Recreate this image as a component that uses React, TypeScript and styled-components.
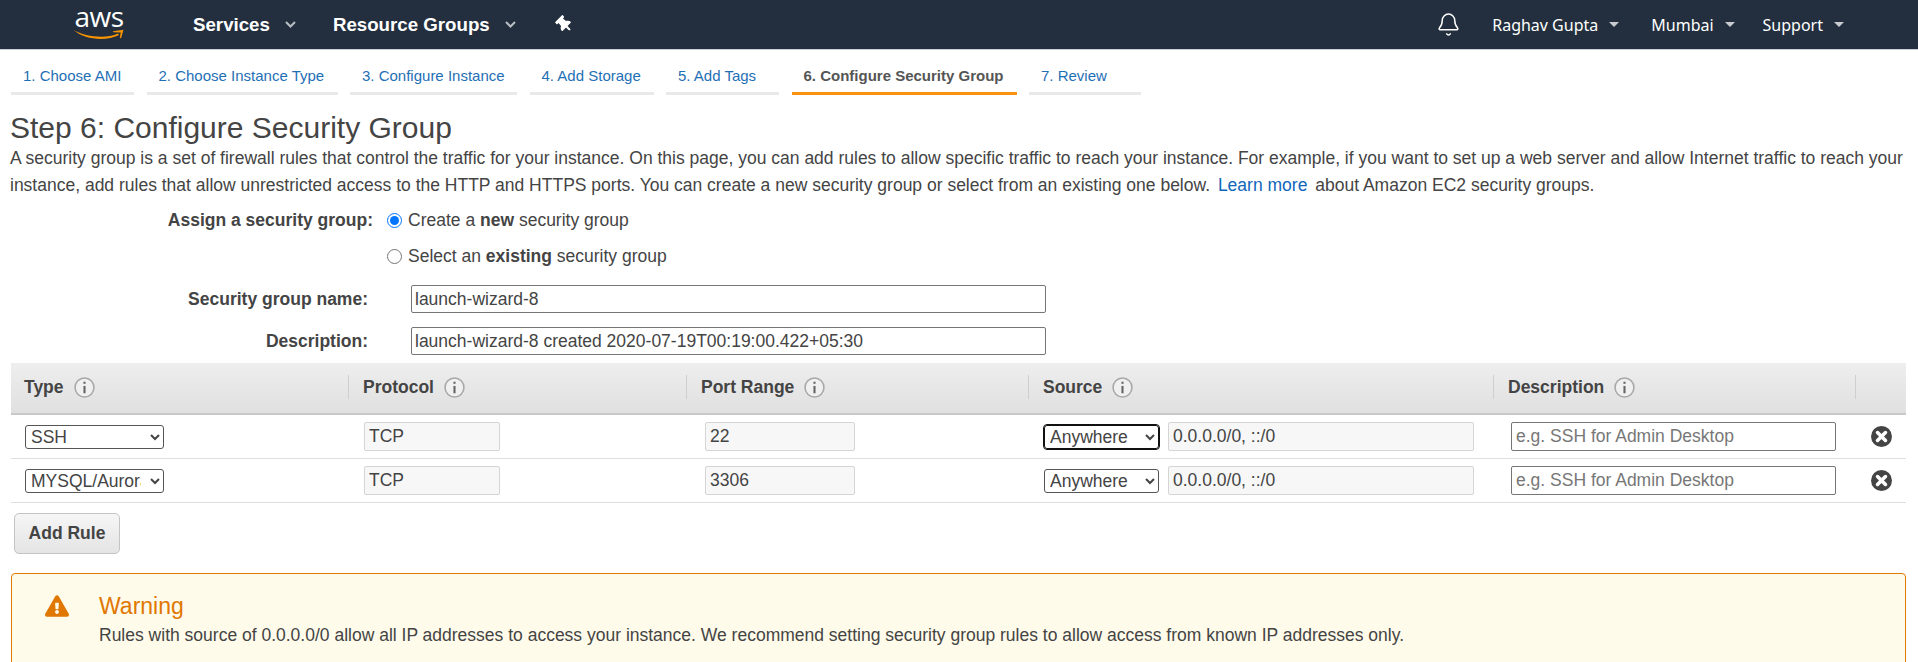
import React from "react";
import styled, { createGlobalStyle } from "styled-components";
import { Bell } from "lucide-react";
import { FaThumbtack, FaExclamationTriangle } from "react-icons/fa";

const GlobalStyle = createGlobalStyle`
  html, body { margin: 0; padding: 0; background: #fff; overflow: hidden; }
  body { font-family: "Liberation Sans", Arial, sans-serif; font-size: 17.5px; color: #444; }
  * { box-sizing: border-box; }
`;

const TopBar = styled.header`
  height: 50px;
  background: #232f3e;
  border-bottom: 1px solid #ccd0d4;
  display: flex;
  align-items: center;
  color: #fff;
`;

const Logo = styled.div`
  width: 52px;
  margin-left: 73px;
  display: flex;
  flex-direction: column;
  align-items: center;
  color: #fff;
  span {
    font-family: "Open Sans", sans-serif;
    font-size: 28px;
    line-height: 28px;
    letter-spacing: -0.6px;
    margin-top: -7px;
  }
  svg { margin-top: -1px; }
`;

const NavMain = styled.span<{ $left: number }>`
  margin-left: ${(p) => p.$left}px;
  font-size: 18.7px;
  font-weight: 700;
  display: flex;
  align-items: center;
  gap: 15px;
`;

const PinWrap = styled.span`
  margin-left: 40px;
  display: flex;
  transform: rotate(-45deg);
  font-size: 17px;
`;

const NavRight = styled.div`
  margin-left: auto;
  margin-right: 74px;
  display: flex;
  align-items: center;
`;

const NavItem = styled.span<{ $left: number }>`
  margin-left: ${(p) => p.$left}px;
  font-family: "Noto Sans", sans-serif;
  font-size: 16px;
  display: flex;
  align-items: center;
  gap: 11px;
`;

const Caret = styled.i`
  width: 0;
  height: 0;
  border-left: 5px solid transparent;
  border-right: 5px solid transparent;
  border-top: 5px solid #c8ccd0;
`;

const Steps = styled.nav`
  display: flex;
  gap: 12.5px;
  padding: 0 11px;
  height: 45px;
`;

const Step = styled.a<{ $active?: boolean; $w: number }>`
  width: ${(p) => p.$w}px;
  height: 45px;
  padding: 17px 0 0 12px;
  font-size: 15px;
  line-height: 18px;
  white-space: nowrap;
  color: ${(p) => (p.$active ? "#555" : "#1f6fb5")};
  font-weight: ${(p) => (p.$active ? 700 : 400)};
  border-bottom: 3px solid ${(p) => (p.$active ? "#f7930f" : "#e9e9e9")};
`;

const Main = styled.main`
  padding: 0 0 0 10px;
`;

const Title = styled.h1`
  margin: 16px 0 0;
  font-size: 30px;
  line-height: 34px;
  font-weight: 400;
  color: #444;
`;

const Intro = styled.p`
  margin: 0;
  font-size: 17.5px;
  line-height: 26.5px;
  white-space: nowrap;
  color: #444;
`;

const LearnMore = styled.a`
  color: #1166bb;
  margin: 0 3px;
`;

const RadioGroup = styled.div`
  margin-top: 4px;
`;

const RadioRow = styled.div`
  height: 36px;
  display: flex;
  align-items: center;
`;

const RadioLabel = styled.label`
  width: 373px;
  margin-left: -10px;
  text-align: right;
  font-weight: 700;
  flex: none;
`;

const Radio = styled.input`
  margin: 0 6px 0 14px;
  width: 15px;
  height: 15px;
  flex: none;
`;

const FieldRow = styled.div<{ $top: number }>`
  display: flex;
  align-items: center;
  margin-top: ${(p) => p.$top}px;
`;

const FieldLabel = styled.label`
  width: 358px;
  text-align: right;
  font-weight: 700;
  flex: none;
`;

const FieldInput = styled.input`
  margin-left: 43px;
  width: 635px;
  height: 28px;
  border: 1px solid #767676;
  border-radius: 2px;
  padding: 0 3px;
  font: 17.5px "Liberation Sans", Arial, sans-serif;
  color: #444;
  outline: none;
`;

const Rules = styled.section`
  margin: 8px 12px 0 1px;
`;

const RuleGrid = styled.div`
  display: grid;
  grid-template-columns: 338px 338px 342px 465px 362px 50px;
  align-items: center;
`;

const HeadRow = styled(RuleGrid)`
  height: 52px;
  background: linear-gradient(#eeeeee, #e0e0e0);
  border-bottom: 2px solid #c8c8c8;
`;

const HeadCell = styled.div<{ $first?: boolean }>`
  height: 24px;
  padding-left: ${(p) => (p.$first ? 13 : 14)}px;
  display: flex;
  align-items: center;
  gap: 10px;
  font-weight: 700;
  color: #444;
  border-right: 1px solid #cfcfcf;
  margin-top: -2px;
`;

const BodyRow = styled(RuleGrid)`
  height: 44px;
  border-bottom: 1px solid #dedede;
`;

const Cell = styled.div<{ $pad?: number }>`
  display: flex;
  align-items: center;
  gap: 9px;
  padding-left: ${(p) => p.$pad ?? 14}px;
`;

const RuleSelect = styled.select<{ $w: number; $focus?: boolean }>`
  width: ${(p) => p.$w}px;
  height: 24px;
  padding: 0 6px 0 1px;
  font: 17.5px "Liberation Sans", Arial, sans-serif;
  color: #444;
  background: #fff;
  border: 1px solid ${(p) => (p.$focus ? "#111" : "#555")};
  border-radius: 3px;
  outline: ${(p) => (p.$focus ? "1px solid #111" : "none")};
  outline-offset: 0;
  flex: none;
`;

const ReadOnlyInput = styled.input<{ $w: number }>`
  width: ${(p) => p.$w}px;
  height: 29px;
  padding: 0 4px;
  border: 1px solid #d5d5d5;
  border-radius: 2px;
  background: #f7f7f7;
  font: 17.5px "Liberation Sans", Arial, sans-serif;
  color: #444;
  outline: none;
  flex: none;
`;

const DescInput = styled.input`
  width: 325px;
  height: 29px;
  padding: 0 4px;
  margin-left: 3px;
  border: 1px solid #767676;
  border-radius: 2px;
  font: 17.5px "Liberation Sans", Arial, sans-serif;
  outline: none;
  &::placeholder { color: #777; }
`;

const AddRule = styled.button`
  display: block;
  margin: 10px 0 0 3px;
  width: 106px;
  height: 41px;
  border: 1px solid #c4c4c4;
  border-radius: 5px;
  background: linear-gradient(#f6f6f6, #e4e4e4);
  font: 700 17.5px "Liberation Sans", Arial, sans-serif;
  color: #444;
`;

const WarningBox = styled.div`
  margin: 19px 12px 0 1px;
  height: 110px;
  border: 1px solid #e07b00;
  border-radius: 4px;
  background: #fffbea;
  padding: 19px 0 0 33px;
  display: flex;
`;

const WarningIcon = styled.span`
  color: #e07700;
  font-size: 24px;
  line-height: 0;
  flex: none;
  width: 54px;
  margin-top: 1px;
`;

const WarningTitle = styled.div`
  color: #e07700;
  font-size: 23px;
  line-height: 27px;
`;

const WarningText = styled.div`
  margin-top: 4px;
  font-size: 17.5px;
  line-height: 22px;
  color: #444;
  white-space: nowrap;
`;

const InfoIcon = () => (
  <svg width="21" height="21" viewBox="0 0 20 20">
    <circle cx="10" cy="10" r="9" fill="#f0f0f0" stroke="#a8a8a8" strokeWidth="1.5" />
    <rect x="9" y="8.5" width="2" height="7" fill="#666" />
    <rect x="9" y="4.5" width="2" height="2" fill="#666" />
  </svg>
);

const RemoveIcon = () => (
  <svg width="23" height="23" viewBox="0 0 22 22">
    <circle cx="11" cy="11" r="10" fill="#444" />
    <path d="M7.2 7.2l7.6 7.6M14.8 7.2l-7.6 7.6" stroke="#fff" strokeWidth="3.4" strokeLinecap="round" />
  </svg>
);

const Chevron = () => (
  <svg width="11" height="7" viewBox="0 0 11 7">
    <path d="M1 1l4.5 4.5L10 1" fill="none" stroke="#b9bec4" strokeWidth="2" />
  </svg>
);

const steps = [
  { label: "1. Choose AMI", w: 123 },
  { label: "2. Choose Instance Type", w: 191 },
  { label: "3. Configure Instance", w: 167 },
  { label: "4. Add Storage", w: 124 },
  { label: "5. Add Tags", w: 113 },
  { label: "6. Configure Security Group", w: 225, active: true },
  { label: "7. Review", w: 112 },
];

const rules = [
  { type: "SSH", port: "22", focus: true },
  { type: "MYSQL/Aurora", port: "3306", focus: false },
];

const columns = ["Type", "Protocol", "Port Range", "Source", "Description"];

export default function App() {
  return (
    <>
      <GlobalStyle />
      <TopBar>
        <Logo>
          <span>aws</span>
          <svg width="52" height="11" viewBox="0 0 52 11">
            <path d="M0.5 1C12 7.5 32 10.5 45 4.5L46 6C33 12.5 12 11 0.5 1Z" fill="#f79400" />
            <path d="M40 2.2L50.5 0.8L48 9.5L46.8 8.8L47.7 3.4L40.2 3.3Z" fill="#f79400" />
          </svg>
        </Logo>
        <NavMain $left={68}>
          Services <Chevron />
        </NavMain>
        <NavMain $left={37}>
          Resource Groups <Chevron />
        </NavMain>
        <PinWrap>
          <FaThumbtack />
        </PinWrap>
        <NavRight>
          <Bell size={25} strokeWidth={1.4} />
          <NavItem $left={31}>
            Raghav Gupta <Caret />
          </NavItem>
          <NavItem $left={32}>
            Mumbai <Caret />
          </NavItem>
          <NavItem $left={28}>
            Support <Caret />
          </NavItem>
        </NavRight>
      </TopBar>

      <Steps>
        {steps.map((s) => (
          <Step key={s.label} $w={s.w} $active={s.active}>
            {s.label}
          </Step>
        ))}
      </Steps>

      <Main>
        <Title>Step 6: Configure Security Group</Title>
        <Intro>
          A security group is a set of firewall rules that control the traffic for your instance. On this page, you can add rules to allow specific traffic to reach your instance. For example, if you want to set up a web server and allow Internet traffic to reach your
          <br />
          instance, add rules that allow unrestricted access to the HTTP and HTTPS ports. You can create a new security group or select from an existing one below. <LearnMore>Learn more</LearnMore> about Amazon EC2 security groups.
        </Intro>

        <RadioGroup>
          <RadioRow>
            <RadioLabel>Assign a security group:</RadioLabel>
            <Radio type="radio" name="sg" defaultChecked />
            <span>
              Create a <b>new</b> security group
            </span>
          </RadioRow>
          <RadioRow>
            <RadioLabel />
            <Radio type="radio" name="sg" />
            <span>
              Select an <b>existing</b> security group
            </span>
          </RadioRow>
        </RadioGroup>

        <FieldRow $top={11}>
          <FieldLabel>Security group name:</FieldLabel>
          <FieldInput readOnly value="launch-wizard-8" />
        </FieldRow>
        <FieldRow $top={14}>
          <FieldLabel>Description:</FieldLabel>
          <FieldInput readOnly value="launch-wizard-8 created 2020-07-19T00:19:00.422+05:30" />
        </FieldRow>

        <Rules>
          <HeadRow>
            {columns.map((c, i) => (
              <HeadCell key={c} $first={i === 0}>
                {c} <InfoIcon />
              </HeadCell>
            ))}
            <div />
          </HeadRow>
          {rules.map((r) => (
            <BodyRow key={r.port}>
              <Cell>
                <RuleSelect $w={139} defaultValue={r.type}>
                  <option>SSH</option>
                  <option>MYSQL/Aurora</option>
                </RuleSelect>
              </Cell>
              <Cell $pad={15}>
                <ReadOnlyInput $w={136} readOnly value="TCP" />
              </Cell>
              <Cell $pad={18}>
                <ReadOnlyInput $w={150} readOnly value={r.port} />
              </Cell>
              <Cell $pad={15}>
                <RuleSelect $w={115} $focus={r.focus} defaultValue="Anywhere">
                  <option>Anywhere</option>
                  <option>Custom</option>
                  <option>My IP</option>
                </RuleSelect>
                <ReadOnlyInput $w={306} readOnly value="0.0.0.0/0, ::/0" />
              </Cell>
              <Cell>
                <DescInput placeholder="e.g. SSH for Admin Desktop" />
              </Cell>
              <Cell>
                <RemoveIcon />
              </Cell>
            </BodyRow>
          ))}
          <AddRule>Add Rule</AddRule>
        </Rules>

        <WarningBox>
          <WarningIcon>
            <FaExclamationTriangle />
          </WarningIcon>
          <div>
            <WarningTitle>Warning</WarningTitle>
            <WarningText>
              Rules with source of 0.0.0.0/0 allow all IP addresses to access your instance. We recommend setting security group rules to allow access from known IP addresses only.
            </WarningText>
          </div>
        </WarningBox>
      </Main>
    </>
  );
}
